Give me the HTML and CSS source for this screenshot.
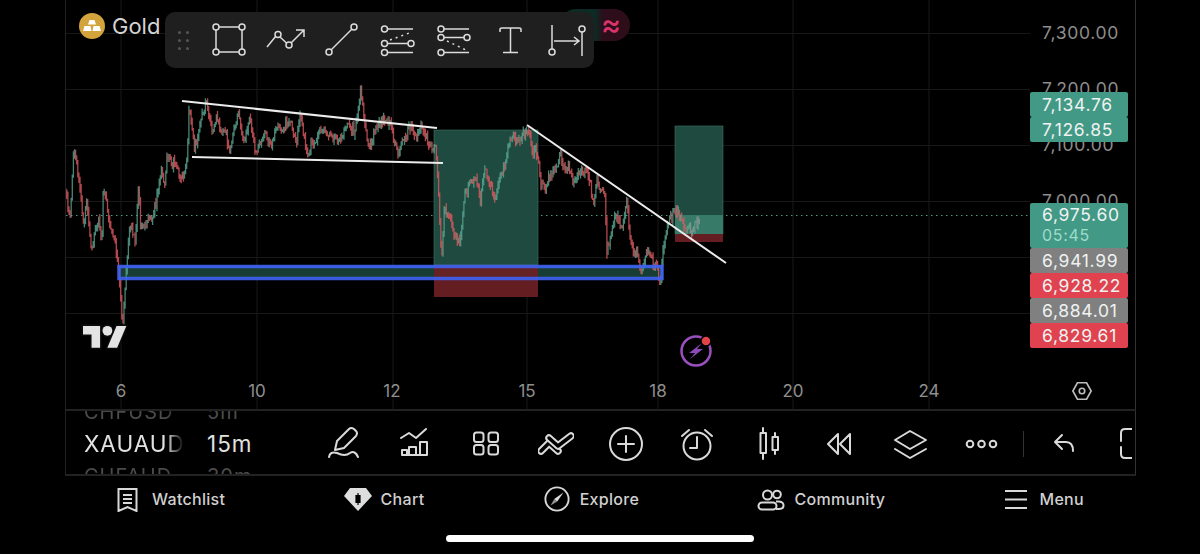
FILE: index.html
```html
<!DOCTYPE html>
<html lang="en">
<head>
<meta charset="utf-8">
<title>XAUAUD chart</title>
<link rel="stylesheet" href="styles.css">
</head>
<body>
<div class="app">
  <section class="stage">
    <svg class="plot" viewBox="66 0 1069 410" aria-hidden="true">
      <g class="grid">
        <path d="M121 0V410M257 0V410M393 0V410M527 0V410M658 0V410M793 0V410M929 0V410"/>
        <path d="M66 33.5H1030M66 89.5H1030M66 145.5H1030M66 201.5H1030M66 257.5H1030M66 313.5H1030"/>
      </g>
      <path class="last-line" d="M66 215.5H1030"/>
      <rect class="box-green" x="434" y="130" width="104" height="135"/>
      <rect class="box-green" x="675" y="126" width="48" height="108"/>
      <rect class="box-live" x="675" y="215" width="48" height="19"/>
      <rect class="zone-fill" x="119" y="266" width="543" height="12"/>
      <rect class="box-red" x="434" y="265" width="104" height="32"/>
      <rect class="box-red" x="675" y="234" width="48" height="8"/>
      <g id="candles" class="candles"></g>
      <rect class="zone-line" x="119" y="266.5" width="543" height="12"/>
      <g class="trend">
        <path d="M182 101L437 128"/>
        <path d="M192 157L443 163"/>
        <path d="M527 125L726 263"/>
      </g>
      <g class="tv-logo" transform="translate(83 321) scale(1.22)">
        <path d="M14 22H7V11H0V4h14v18zM28 22h-8l7.5-18h8L28 22z"/>
        <circle cx="20" cy="8" r="4"/>
      </g>
      <g class="bolt">
        <circle class="bolt-ring" cx="696" cy="351" r="14.5"/>
        <path class="bolt-mark" d="M702 343L689 353H695L690 359L703 349H697Z"/>
        <circle class="bolt-dot" cx="706" cy="341" r="5"/>
      </g>
    </svg>

    <div class="symbol">
      <svg class="coin" viewBox="0 0 26 26" aria-hidden="true">
        <circle cx="13" cy="13" r="13" fill="#d3a33c"/>
        <path fill="#fff" d="M10.500 7H15.500L17 11.500H9ZM5.500 13H11.500L12.500 18H4ZM14.500 13H20.500L22 18H13.500Z"/>
      </svg>
      <span>Gold</span>
    </div>
    <div class="status-pill">≈</div>

    <div class="draw-bar">
      <div class="grip"><i></i><i></i><i></i><i></i><i></i><i></i></div>
      <svg viewBox="211 22 36 36"><path d="M219 27H239M216 30V49M242 30V49M219 52H239"/><circle cx="216" cy="27" r="3"/><circle cx="242" cy="27" r="3"/><circle cx="216" cy="52" r="3"/><circle cx="242" cy="52" r="3"/></svg>
      <svg viewBox="267 22 36 36"><path d="M267 47L276 36M280 37L286.500 43M291 43L304 30M296 30H304V37"/><circle cx="278" cy="34.500" r="3"/><circle cx="289" cy="45" r="3"/></svg>
      <svg viewBox="323 22 36 36"><path d="M331 50L352 29"/><circle cx="329" cy="52" r="3"/><circle cx="354" cy="27" r="3"/></svg>
      <svg viewBox="379 22 36 36"><path d="M386.500 29H412M386.500 43.500H407M386.500 52.500H412"/><path class="dots" d="M389 40L411 32"/><circle cx="383.500" cy="29" r="3"/><circle cx="383.500" cy="43.500" r="3"/><circle cx="410" cy="43.500" r="3"/><circle cx="383.500" cy="52.500" r="3"/></svg>
      <svg viewBox="435 22 36 36"><path d="M443 29H468M443 37.500H463M443 52.500H468"/><path class="dots" d="M446 41L467 51"/><circle cx="440" cy="29" r="3"/><circle cx="440" cy="37.500" r="3"/><circle cx="466" cy="37.500" r="3"/><circle cx="440" cy="52.500" r="3"/></svg>
      <svg viewBox="492 22 36 36"><path d="M500 32V29.500Q500 28 502 28H519Q521 28 521 29.500V32M510.500 28V52.500M503 52.500H518"/></svg>
      <svg viewBox="548 22 36 36"><path d="M552 25V49M582 32V56M554 41H578M574 37L579 41L574 45"/><circle cx="552" cy="52" r="3"/><circle cx="582" cy="29" r="3"/></svg>
    </div>

    <div class="price-axis">
      <span>7,300.00</span><span>7,200.00</span><span>7,100.00</span><span>7,000.00</span>
    </div>

    <div class="tags">
      <div class="tag-group">
        <div class="tag teal">7,134.76</div>
        <div class="tag teal">7,126.85</div>
      </div>
      <div class="tag-group live">
        <div class="tag teal tall">6,975.60<small>05:45</small></div>
        <div class="tag grey">6,941.99</div>
        <div class="tag red">6,928.22</div>
        <div class="tag grey">6,884.01</div>
        <div class="tag red">6,829.61</div>
      </div>
    </div>

    <div class="time-axis">
      <span class="d6">6</span><span class="d10">10</span><span class="d12">12</span><span class="d15">15</span><span class="d18">18</span><span class="d20">20</span><span class="d24">24</span>
      <svg class="axis-gear" viewBox="0 0 24 24" aria-hidden="true"><path d="M7 3H17L22 12L17 21H7L2 12Z"/><circle cx="12" cy="12" r="3"/></svg>
    </div>
  </section>

  <section class="tools">
    <div class="picker">
      <div class="picker-col names">
        <span class="ghost">CHFUSD</span><span class="current">XAUAUD</span><span class="ghost">CHFAUD</span>
      </div>
      <div class="picker-col frames">
        <span class="ghost">5m</span><span class="current">15m</span><span class="ghost">30m</span>
      </div>
    </div>
    <div class="tool-icons">
      <svg viewBox="326 426 36 36"><path d="M335 450L337 441L349 429Q351 427 354 429L356 431Q358 433 356 436L344 448Z"/><path d="M329 457Q330 451 337 453Q345 457 350 453Q355 450 358 457"/></svg>
      <svg viewBox="396 426 36 36"><path d="M400 438L408 433L415 438L425 429"/><path d="M401 450H406V455H401ZM408 447H415V455H408ZM419 442H426V455H419ZM406 455H419"/></svg>
      <svg viewBox="467 426 36 36"><rect x="473" y="432.500" width="9.500" height="9.500" rx="2.500"/><rect x="487.500" y="432.500" width="9.500" height="9.500" rx="2.500"/><rect x="473" y="445" width="9.500" height="9.500" rx="2.500"/><rect x="487.500" y="445" width="9.500" height="9.500" rx="2.500"/></svg>
      <svg viewBox="538 426 36 36"><path class="band" d="M541 451L549 443L558 451"/><path class="band-in" d="M541 451L549 443L558 451"/><path class="band" d="M549 438L558 446L571 436"/><path class="band-in" d="M549 438L558 446L571 436"/></svg>
      <svg viewBox="609 426 36 36"><circle cx="626" cy="444" r="16"/><path d="M618 444H634M626 436V452"/></svg>
      <svg viewBox="680 426 36 36"><circle cx="697" cy="446" r="13.500"/><path d="M697 437V448H690M682 436L689 430M705 430L712 436"/></svg>
      <svg viewBox="751 426 36 36"><rect x="760.500" y="433" width="5.500" height="20"/><rect x="772.500" y="437" width="5.500" height="13"/><path d="M763 428V433M763 453V459M775 433V437M775 450V454"/></svg>
      <svg viewBox="822 426 36 36"><path d="M838 434V454L828 444ZM850 434V454L840 444Z"/></svg>
      <svg viewBox="892 426 36 36"><path d="M910 431L926 440L910 449L895 440ZM895 449L910 458L926 449"/></svg>
      <svg viewBox="963 426 36 36"><circle cx="970" cy="444" r="3.300"/><circle cx="981.500" cy="444" r="3.300"/><circle cx="993" cy="444" r="3.300"/></svg>
      <i class="divider"></i>
      <svg class="undo" viewBox="1046 426 36 36"><path d="M1062 435L1055 442L1062 449M1055 442H1066Q1073 442 1073 451"/></svg>
      <svg class="full" viewBox="1120 428 12 32"><path d="M1133 429H1125Q1121 429 1121 433V441M1121 447V454Q1121 458 1125 458H1133"/></svg>
    </div>
  </section>

  <nav class="nav">
    <a class="nav-item"><svg viewBox="115 486 24 26"><path d="M117.500 489H135.500V511L126.500 507L117.500 511Z"/><path d="M122 495H131M122 499H131M122 503H131"/></svg>Watchlist</a>
    <a class="nav-item"><svg class="wide" viewBox="343 486 28 26"><path class="solid" d="M349 488H365L371 496L357 511L343 496Z"/><path class="cut" d="M355 495.500H359V502.500H355ZM357 493V505"/></svg>Chart</a>
    <a class="nav-item"><svg class="wide" viewBox="542 486 28 28"><circle cx="556" cy="500" r="12.500"/><path class="solid" d="M563 493L556 503L553 500Z"/><path class="half" d="M549 507L553 500L556 503Z"/></svg>Explore</a>
    <a class="nav-item"><svg class="wide" viewBox="756 486 28 26"><circle cx="766.500" cy="495" r="4.500"/><circle cx="776" cy="494.500" r="3.800"/><rect x="757.500" y="502.500" width="18" height="7" rx="3.500"/><path d="M775 501.500H778Q783 502 782.500 506Q782 509 778 509H775"/></svg>Community</a>
    <a class="nav-item"><svg class="wide menu" viewBox="1004 486 24 26"><path d="M1005 491H1027M1005 499.500H1027M1005 508H1027"/></svg>Menu</a>
  </nav>
  <div class="home-bar"></div>
</div>
<script src="chart.js"></script>
</body>
</html>
```

FILE: styles.css
```css
* { box-sizing: border-box; }

html, body {
  margin: 0;
  background: #000;
}

body {
  font-family: Inter, "Liberation Sans", sans-serif;
  color: #d6d6d6;
}

.app {
  width: 1200px;
  height: 554px;
  overflow: hidden;
  position: relative;
  display: flex;
  flex-direction: column;
  background: #000;
}

.stage {
  position: relative;
  height: 411px;
  margin: 0 64px 0 65px;
  border-left: 1px solid #222;
  border-right: 1px solid #333;
  border-bottom: 2px solid #222;
}

.plot {
  display: block;
  width: 1069px;
  height: 410px;
}

.grid path {
  fill: none;
  stroke: #181818;
  stroke-width: 1;
}

.last-line {
  fill: none;
  stroke: #4a9a86;
  stroke-width: 1;
  stroke-dasharray: 1.500 3.500;
}

.box-green { fill: #1e4a40; stroke: #3c7565; stroke-width: 0.600; }
.box-live { fill: #377a68; }
.box-red { fill: #6c2023; opacity: 0.92; }
.zone-fill { fill: #173d34; }
.zone-line { fill: none; stroke: #3f62f0; stroke-width: 3.500; opacity: 0.92; }

.candles { filter: blur(0.5px); }
.candles path { fill: none; stroke-width: 1.300; }

.trend path {
  fill: none;
  stroke: #ececec;
  stroke-width: 2;
}

.tv-logo path,
.tv-logo circle {
  fill: #e4e4e4;
  stroke: #0c0c0c;
  stroke-width: 2.500;
  paint-order: stroke;
}

.bolt-ring { fill: none; stroke: #9a4fc0; stroke-width: 2.500; }
.bolt-mark { fill: #8e49b8; }
.bolt-dot { fill: #e2424a; stroke: #000; stroke-width: 1.500; }

.symbol {
  position: absolute;
  top: 13px;
  left: 13px;
  display: flex;
  align-items: center;
  gap: 7px;
  font-size: 22px;
  color: #d4d4d4;
}

.coin { width: 26px; height: 26px; }

.status-pill {
  position: absolute;
  top: 9px;
  left: 494px;
  width: 70px;
  height: 32px;
  padding-right: 9px;
  border-radius: 16px;
  background: linear-gradient(90deg, #0d2a24 0 50%, #2c0d19 62%);
  color: #d8336a;
  font-size: 30px;
  font-weight: 500;
  line-height: 30px;
  text-align: right;
}

.draw-bar {
  position: absolute;
  top: 12px;
  left: 99px;
  width: 429px;
  height: 56px;
  display: flex;
  align-items: center;
  gap: 20.200px;
  border-radius: 10px;
  background: #1f1f1f;
  padding-left: 13px;
}

.draw-bar svg {
  width: 36px;
  height: 36px;
  flex: none;
  overflow: visible;
  fill: none;
  stroke: #dcdcdc;
  stroke-width: 1.500;
}

.draw-bar .dots { stroke-dasharray: 2 4; }

.grip {
  width: 11px;
  margin-right: 1.800px;
  display: grid;
  grid-template-columns: 3px 3px;
  justify-content: space-between;
  gap: 5px 0;
}

.grip i {
  width: 3px;
  height: 3px;
  border-radius: 50%;
  background: #555;
}

.price-axis {
  position: absolute;
  top: 5px;
  left: 976px;
  display: flex;
  flex-direction: column;
}

.price-axis span {
  height: 56px;
  line-height: 56px;
  font-size: 17.500px;
  letter-spacing: 0.700px;
  color: #8d8d8d;
}

.tags {
  position: absolute;
  top: 92px;
  left: 964px;
  width: 98px;
  display: flex;
  flex-direction: column;
  gap: 61px;
}

.tag-group {
  display: flex;
  flex-direction: column;
}

.tag {
  height: 25px;
  padding-left: 12px;
  border-radius: 2px;
  font-size: 17.500px;
  letter-spacing: 0.700px;
  line-height: 25px;
  color: #eef2f1;
}

.teal { background: #429985; }
.grey { background: #808080; }
.red { background: #e0434f; }

.tall {
  height: 45px;
  line-height: 23px;
}

.tall small {
  display: block;
  font-size: 16px;
  line-height: 18px;
  color: #9fdccb;
}

.time-axis span {
  position: absolute;
  top: 380px;
  transform: translateX(-50%);
  font-size: 17px;
  line-height: 22px;
  color: #8f8f8f;
}

.d6 { left: 55px; }
.d10 { left: 191px; }
.d12 { left: 326px; }
.d15 { left: 461px; }
.d18 { left: 592px; }
.d20 { left: 727px; }
.d24 { left: 863px; }

.axis-gear {
  position: absolute;
  top: 380px;
  left: 1005px;
  width: 22px;
  height: 22px;
  fill: none;
  stroke: #bdbdbd;
  stroke-width: 1.800;
}

.tools {
  height: 65px;
  margin: 0 64px 0 65px;
  border-left: 1px solid #222;
  border-right: 1px solid #333;
  border-bottom: 2px solid #222;
  display: flex;
  overflow: hidden;
}

.picker {
  width: 260px;
  padding-left: 18px;
  display: flex;
  flex: none;
}

.picker-col {
  display: flex;
  flex-direction: column;
  height: 63px;
  overflow: hidden;
}

.picker-col span {
  height: 32px;
  flex: none;
  line-height: 32px;
  white-space: nowrap;
}

.names {
  width: 100px;
  margin-right: 23px;
  -webkit-mask-image: linear-gradient(90deg, #000 82%, transparent 100%);
  mask-image: linear-gradient(90deg, #000 82%, transparent 100%);
}

.picker-col .ghost:first-child { margin-top: -15px; }

.current {
  font-size: 22.500px;
  letter-spacing: 1px;
  color: #e2e2e2;
}

.ghost {
  font-size: 20px;
  letter-spacing: 1px;
  color: #4c4c4c;
}

.tool-icons {
  display: flex;
  align-items: center;
  flex: 1;
  gap: 34.800px;
  margin-top: 3px;
}

.tool-icons svg {
  width: 36px;
  height: 36px;
  flex: none;
  fill: none;
  stroke: #dadada;
  stroke-width: 2;
  stroke-linejoin: round;
  stroke-linecap: round;
}

.tool-icons .band { stroke-width: 7.500; }
.tool-icons .band-in { stroke: #000; stroke-width: 3.500; }

.divider {
  width: 1px;
  height: 26px;
  flex: none;
  margin: 0 -7px 0 -11px;
  background: #333;
}

.tool-icons .undo { margin-left: -6px; }

.tool-icons .full {
  width: 12px;
  height: 32px;
  margin-left: 3px;
}

.nav {
  display: flex;
  justify-content: space-between;
  height: 43px;
  padding: 11px 116px 0;
}

.nav-item {
  display: flex;
  align-items: center;
  gap: 12px;
  height: 24px;
  font-size: 16px;
  font-weight: 500;
  letter-spacing: 0.300px;
  color: #d0d0d0;
}

.nav-item svg {
  width: 24px;
  height: 26px;
  flex: none;
  fill: none;
  stroke: #d8d8d8;
  stroke-width: 2;
}

.nav-item svg.wide { width: 28px; margin-right: -3px; }
.nav-item svg.menu { width: 24px; margin-right: 0; }
.nav-item .solid { fill: #dedede; stroke: none; }
.nav-item .half { fill: #8f8f8f; stroke: none; }
.nav-item .cut { fill: #000; stroke: #000; stroke-width: 1.200; }

.home-bar {
  position: absolute;
  left: 446px;
  top: 535px;
  width: 308px;
  height: 7px;
  border-radius: 4px;
  background: #fff;
}
```

FILE: chart.js
```js
(function () {
  var first = [[17,320],[30,400],[40,210],[50,220],[60,300],[70,400],[80,330],[95,480],[115,380],[125,470],[130,290],[150,380],[175,500],[188,690],[195,600],[210,400],[225,450],[237,265],[240,400],[260,380],[275,400],[290,330],[305,240],[315,310],[320,210],[345,215],[370,260],[380,200],[388,45],[405,170],[420,90],[440,60],[455,140],[470,80],[510,180],[535,60],[550,130],[570,60],[590,190],[615,120],[630,170],[650,120],[680,90],[710,140],[720,70],[740,190],[790,100],[820,170],[860,120],[885,130],[903,10],[925,190],[950,110],[990,90],[1015,200],[1045,110],[1070,150],[1085,120],[1110,170],[1130,190]];
  var second = [[10,90],[28,120],[35,460],[45,240],[40,310],[60,320],[75,380],[90,400],[105,250],[120,220],[140,210],[150,270],[165,180],[195,270],[215,190],[240,80],[265,80],[290,70],[305,130],[315,110],[335,230],[345,220],[385,140],[400,170],[430,200],[470,160],[490,300],[500,210],[525,260],[530,440],[555,320],[575,350],[590,270],[605,400],[620,400],[635,480],[650,430],[680,460],[690,510],[700,420],[720,320],[745,300],[770,360],[790,360],[800,320],[810,340]];

  var points = first.map(function (p) { return [60 + p[0] / 3, 90 + p[1] / 3]; })
    .concat(second.slice(2).map(function (p) { return [430 + p[0] / 3, 110 + p[1] / 3]; }));

  var seed = 23;
  function rand() {
    seed = (seed * 16807) % 2147483647;
    return seed / 2147483647;
  }

  function priceAt(x) {
    for (var i = 1; i < points.length; i++) {
      if (x <= points[i][0]) {
        var a = points[i - 1], b = points[i];
        return a[1] + (b[1] - a[1]) * (x - a[0]) / (b[0] - a[0] || 1);
      }
    }
    return points[points.length - 1][1];
  }

  var up = '', down = '', upLate = '', downLate = '';
  var step = 1.1;
  var prev = priceAt(points[0][0]);
  var drift = 0;
  for (var x = points[0][0]; x < points[points.length - 1][0]; x += step) {
    drift = drift * 0.8 + (rand() - 0.5) * 7;
    var close = priceAt(x) + drift + (rand() - 0.5) * 7;
    var high = Math.min(prev, close) - rand() * 5;
    var low = Math.max(prev, close) + rand() * 5;
    var d = 'M' + x.toFixed(1) + ' ' + high.toFixed(1) + 'V' + low.toFixed(1);
    var late = x > 690;
    if (close < prev) {
      if (late) { upLate += d; } else { up += d; }
    } else {
      if (late) { downLate += d; } else { down += d; }
    }
    prev = close;
  }

  var layers = [[up, '#5aa893', 0.8], [down, '#de5a60', 0.8], [upLate, '#63a897', 0.7], [downLate, '#a89a96', 0.7]];
  var group = document.getElementById('candles');
  layers.forEach(function (layer) {
    var path = document.createElementNS('http://www.w3.org/2000/svg', 'path');
    path.setAttribute('d', layer[0]);
    path.setAttribute('stroke', layer[1]);
    path.setAttribute('opacity', layer[2]);
    group.appendChild(path);
  });
})();
```
